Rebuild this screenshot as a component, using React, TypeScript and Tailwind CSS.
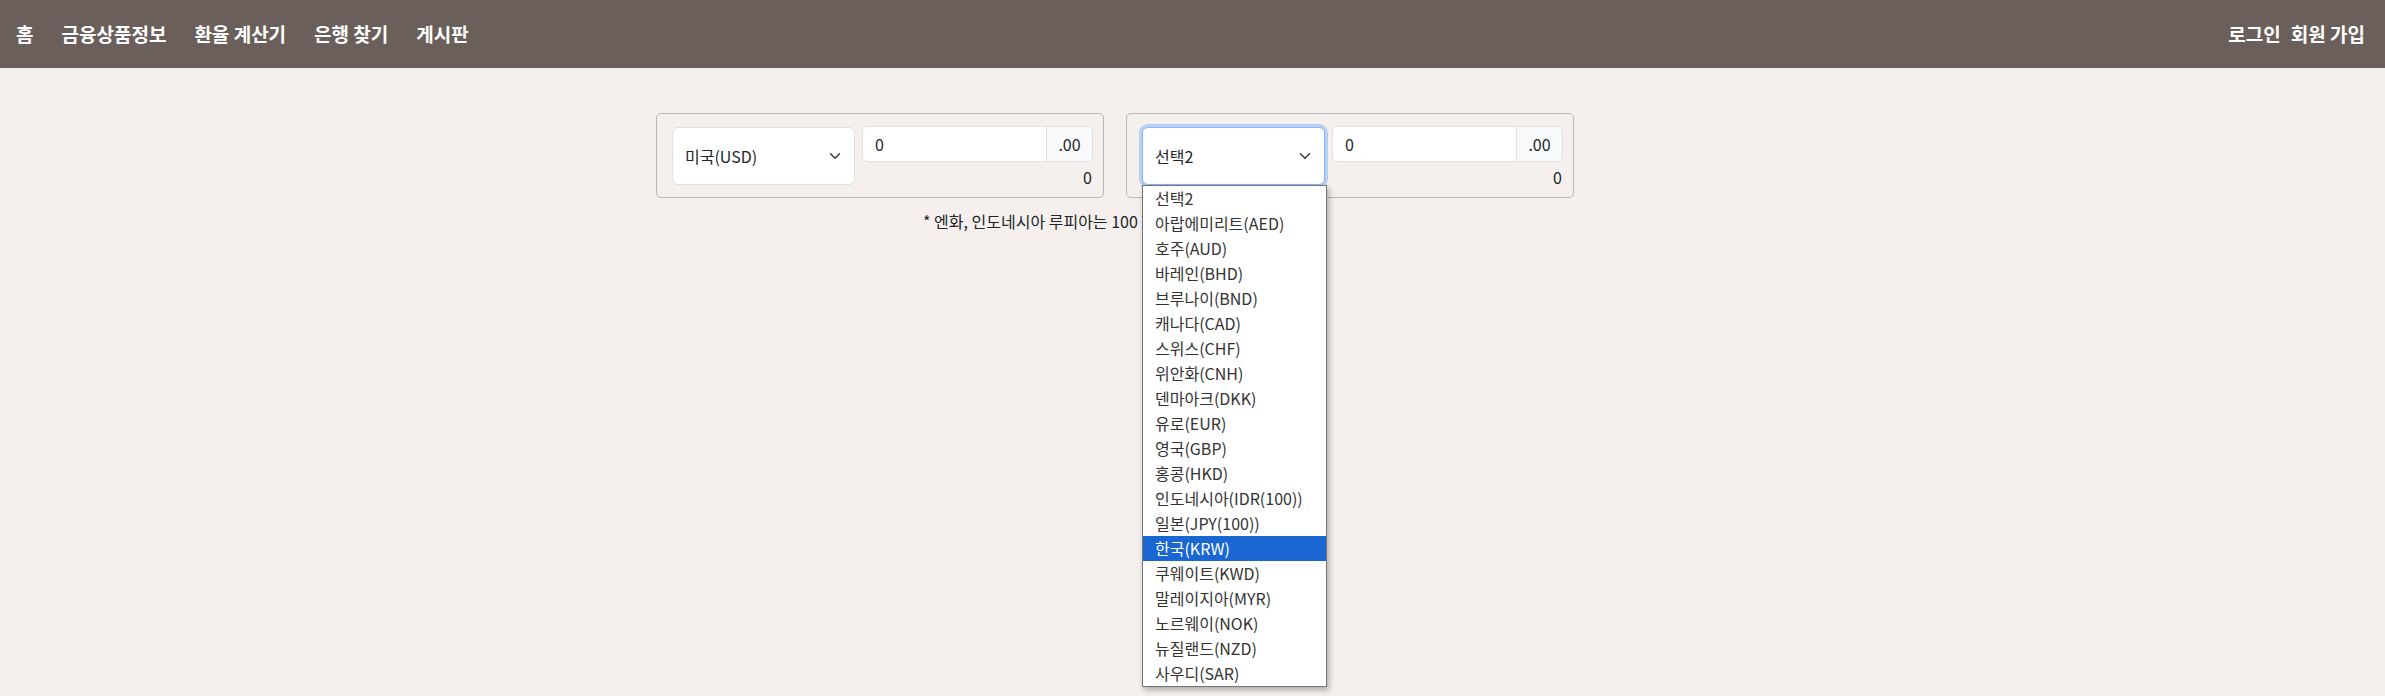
import React from "react";

const NAV_LEFT = ["홈", "금융상품정보", "환율 계산기", "은행 찾기", "게시판"];

const CURRENCIES = [
  "선택2",
  "아랍에미리트(AED)",
  "호주(AUD)",
  "바레인(BHD)",
  "브루나이(BND)",
  "캐나다(CAD)",
  "스위스(CHF)",
  "위안화(CNH)",
  "덴마아크(DKK)",
  "유로(EUR)",
  "영국(GBP)",
  "홍콩(HKD)",
  "인도네시아(IDR(100))",
  "일본(JPY(100))",
  "한국(KRW)",
  "쿠웨이트(KWD)",
  "말레이지아(MYR)",
  "노르웨이(NOK)",
  "뉴질랜드(NZD)",
  "사우디(SAR)",
];

function Chevron() {
  return (
    <svg width="12" height="8" viewBox="0 0 12 8" fill="none">
      <path d="M1.5 1.8 6 6.2l4.5-4.4" stroke="#343a40" strokeWidth="1.5" strokeLinecap="round" strokeLinejoin="round" />
    </svg>
  );
}

function CurrencyBox({ label, focused }: { label: string; focused?: boolean }) {
  return (
    <div className="w-[448px] h-[85px] border border-[#bdb8b5] rounded-[5px] pl-[15px] pr-[10px] pt-[12px] flex items-start gap-[7px]">
      <div className="relative mt-[1px]">
        <div
          className={`w-[183px] h-[58px] bg-white rounded-[6px] border flex items-center justify-between pl-[12px] pr-[13px] ${
            focused ? "border-[#86b7fe] shadow-[0_0_0_3px_rgba(13,110,253,0.25)]" : "border-[#e3e1e0]"
          }`}
        >
          <span className="text-[16px] text-[#212529]">{label}</span>
          <Chevron />
        </div>
        {focused && (
          <ul className="absolute left-0 top-[58px] w-[185px] bg-white border border-[#767676] shadow-[2px_3px_6px_rgba(0,0,0,0.3)] z-10">
            {CURRENCIES.map((c) => (
              <li
                key={c}
                className={`h-[25px] leading-[25px] pl-[12px] text-[16px] ${
                  c === "한국(KRW)" ? "bg-[#1a66d2] text-white" : "text-[#333333]"
                }`}
              >
                {c}
              </li>
            ))}
          </ul>
        )}
      </div>
      <div className="flex-1">
        <div className="h-[36px] flex border border-[#e3e1e0] rounded-[6px] overflow-hidden">
          <div className="flex-1 bg-white pl-[12px] flex items-center text-[16px] text-[#212529]">0</div>
          <div className="w-[46px] bg-[#f8f9fa] border-l border-[#e3e1e0] flex items-center justify-center text-[16px] text-[#212529]">
            .00
          </div>
        </div>
        <div className="text-right text-[16px] leading-[24px] mt-[3px] pr-[1px] text-[#212529]">0</div>
      </div>
    </div>
  );
}

export default function App() {
  return (
    <div
      className="min-h-screen bg-[#f5f0ed]"
      style={{ fontFamily: '"Noto Sans CJK KR", "Noto Sans", sans-serif' }}
    >
      <nav className="h-[68px] bg-[#6b5f5b] flex items-center justify-between pl-[16px] pr-[20px] text-white font-bold text-[19px]">
        <div className="flex items-center gap-[28px]">
          {NAV_LEFT.map((n) => (
            <a key={n} className="cursor-pointer">
              {n}
            </a>
          ))}
        </div>
        <div className="flex items-center gap-[10px]">
          <a className="cursor-pointer">로그인</a>
          <a className="cursor-pointer">회원 가입</a>
        </div>
      </nav>

      <main className="pt-[45px] pl-[656px]">
        <div className="w-[918px]">
          <div className="flex gap-[22px]">
            <CurrencyBox label="미국(USD)" />
            <CurrencyBox label="선택2" focused />
          </div>
          <p className="mt-[11px] pl-[267px] text-[16px] leading-[24px] text-[#212529]">
            * 엔화, 인도네시아 루피아는 100 단위로 계산됩니다.
          </p>
        </div>
      </main>
    </div>
  );
}
